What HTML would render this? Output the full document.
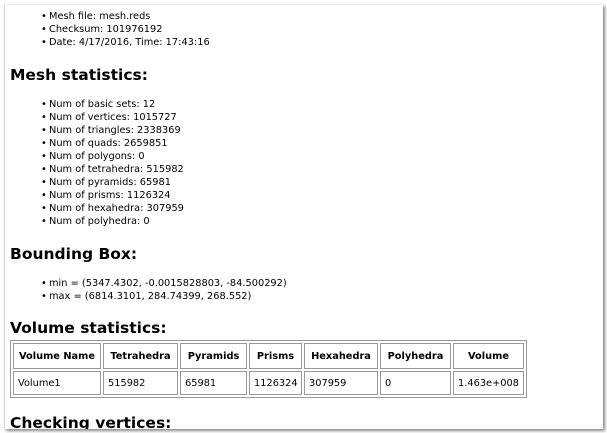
<!DOCTYPE html><html><head><style>
body{margin:0;width:607px;height:433px;background:#fff;overflow:hidden;font-family:"DejaVu Sans","Liberation Sans",sans-serif;position:relative}
.pg{position:absolute;left:4px;top:4px;width:598px;height:424px;background:#fff;border-left:1px solid #ddd;border-top:1px solid #eee;box-shadow:2px 2px 3px #888;overflow:hidden}
.t{position:absolute;font-size:9.8px;color:#000;white-space:nowrap;line-height:13px}
.t:before{content:"•";position:absolute;left:-8px}
h{position:absolute;font-weight:bold;font-size:15.5px;left:5px;font-family:"DejaVu Sans",sans-serif;white-space:nowrap}
table{position:absolute;left:5px;top:335px;border:1px solid #999;border-collapse:separate;border-spacing:2px;font-size:9.8px;table-layout:fixed;width:516px}
td,th{border:1px solid #999;padding:0 4px;white-space:nowrap;overflow:hidden;box-sizing:border-box}
th{height:26px}
td{height:24px}
</style></head><body><div class="pg">
<div class="t" style="left:44px;top:5px">Mesh file: mesh.reds</div>
<div class="t" style="left:44px;top:18px">Checksum: 101976192</div>
<div class="t" style="left:44px;top:31px">Date: 4/17/2016, Time: 17:43:16</div>
<h style="top:61px">Mesh statistics:</h>
<div class="t" style="left:44px;top:93px">Num of basic sets: 12</div>
<div class="t" style="left:44px;top:106px">Num of vertices: 1015727</div>
<div class="t" style="left:44px;top:119px">Num of triangles: 2338369</div>
<div class="t" style="left:44px;top:132px">Num of quads: 2659851</div>
<div class="t" style="left:44px;top:145px">Num of polygons: 0</div>
<div class="t" style="left:44px;top:158px">Num of tetrahedra: 515982</div>
<div class="t" style="left:44px;top:171px">Num of pyramids: 65981</div>
<div class="t" style="left:44px;top:184px">Num of prisms: 1126324</div>
<div class="t" style="left:44px;top:197px">Num of hexahedra: 307959</div>
<div class="t" style="left:44px;top:210px">Num of polyhedra: 0</div>
<h style="top:240px">Bounding Box:</h>
<div class="t" style="left:44px;top:272px">min = (5347.4302, -0.0015828803, -84.500292)</div>
<div class="t" style="left:44px;top:285px">max = (6814.3101, 284.74399, 268.552)</div>
<h style="top:314px">Volume statistics:</h>
<table><colgroup><col style="width:88px"><col style="width:75px"><col style="width:67px"><col style="width:53px"><col style="width:74px"><col style="width:71px"><col style="width:71px"></colgroup>
<tr><th>Volume Name</th><th>Tetrahedra</th><th>Pyramids</th><th>Prisms</th><th>Hexahedra</th><th>Polyhedra</th><th>Volume</th></tr>
<tr><td>Volume1</td><td>515982</td><td>65981</td><td>1126324</td><td>307959</td><td>0</td><td>1.463e+008</td></tr></table>
<h style="top:409px">Checking vertices:</h>
</div></body></html>
